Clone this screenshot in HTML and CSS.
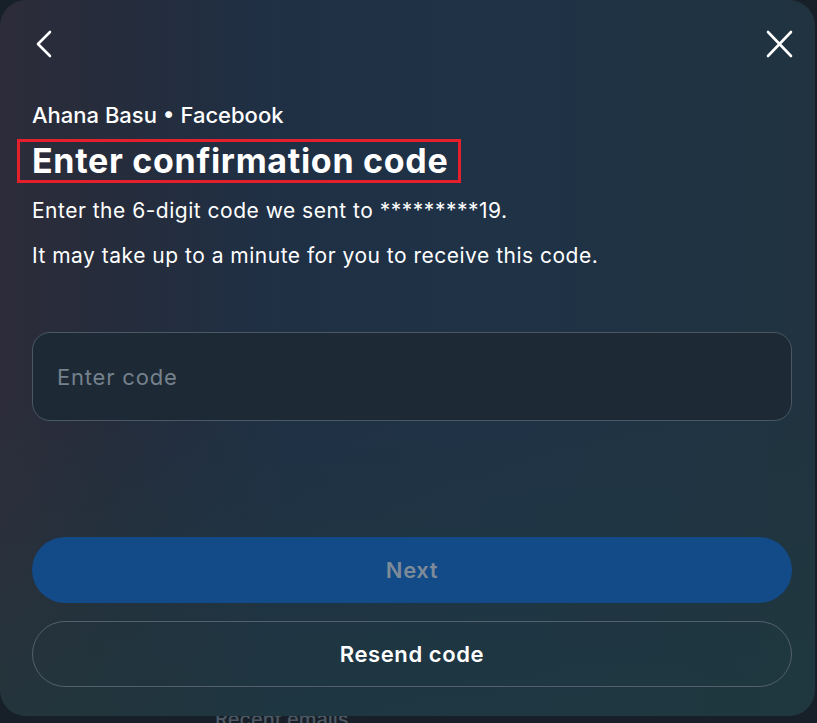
FILE: index.html
```html
<!DOCTYPE html>
<html lang="en">
<head>
  <meta charset="UTF-8">
  <meta name="viewport" content="width=device-width, initial-scale=1.0">
  <title>Enter confirmation code</title>
  <link rel="stylesheet" href="styles.css">
</head>
<body>
  <div class="behind">Recent emails</div>
  <div class="card">
    <div class="top-bar">
      <button class="icon-btn" aria-label="Back">
        <svg width="28" height="28" viewBox="0 0 28 28"><path d="M16 2 L4 14 L16 26" fill="none" stroke="#fff" stroke-width="2.6" stroke-linecap="round" stroke-linejoin="round"/></svg>
      </button>
      <button class="icon-btn" aria-label="Close">
        <svg width="28" height="28" viewBox="0 0 28 28"><path d="M3 2 L26 26 M26 2 L3 26" fill="none" stroke="#fff" stroke-width="2.6" stroke-linecap="round"/></svg>
      </button>
    </div>

    <div class="account">Ahana Basu • Facebook</div>
    <h1><span class="marked">Enter confirmation code</span></h1>
    <p class="desc">Enter the 6-digit code we sent to *********19.</p>
    <p class="desc">It may take up to a minute for you to receive this code.</p>

    <input class="code-input" type="text" placeholder="Enter code">

    <div class="actions">
      <button class="btn btn-primary" disabled>Next</button>
      <button class="btn btn-outline">Resend code</button>
    </div>
  </div>
</body>
</html>
```

FILE: styles.css
```css
body {
  margin: 0;
  padding: 0;
  width: 817px;
  height: 723px;
  overflow: hidden;
  background-color: #172029;
  font-family: Inter, "Open Sans", sans-serif;
  color: #fff;
  position: relative;
}

.behind {
  position: absolute;
  left: 215px;
  top: 707px;
  font-size: 20px;
  line-height: 24px;
  font-weight: 500;
  color: #4d5863;
}

.card {
  position: relative;
  width: 815px;
  height: 716px;
  box-sizing: border-box;
  padding: 30px 23px 0 32px;
  border-radius: 26px;
  background:
    linear-gradient(180deg, rgba(30, 50, 70, 0) 55%, rgba(30, 60, 62, 0.55) 100%),
    linear-gradient(90deg, #2d2c3a 0%, #262c3b 12%, #1f3045 35%, #1f3246 65%, #20333f 100%);
  display: flex;
  flex-direction: column;
}

.top-bar {
  display: flex;
  justify-content: space-between;
  height: 28px;
  margin-left: 2px;
  margin-right: -1px;
}

.icon-btn {
  background: none;
  border: none;
  padding: 0;
  width: 28px;
  height: 28px;
  cursor: pointer;
}

.account {
  margin-top: 44px;
  font-size: 22px;
  font-weight: 500;
  line-height: 26px;
}

h1 {
  margin: 11px 0 0 -15px;
  font-size: 34px;
  font-weight: 700;
  line-height: 38px;
  letter-spacing: 0.7px;
}

.marked {
  display: inline-block;
  border: 3px solid #e3202c;
  padding: 0 10px 0 12px;
}

.desc {
  margin: 16px 0 0;
  font-size: 21px;
  line-height: 24px;
  letter-spacing: 0.5px;
}

.desc + .desc {
  margin-top: 21px;
}

.code-input {
  margin-top: 64px;
  height: 89px;
  box-sizing: border-box;
  width: 100%;
  padding: 0 24px;
  border: 1px solid #4a5866;
  border-radius: 18px;
  background-color: #1d2935;
  font-family: inherit;
  font-size: 22px;
  letter-spacing: 0.8px;
  color: #fff;
}

.code-input::placeholder {
  color: #75818c;
}

.code-input:focus {
  outline: none;
}

.actions {
  margin-top: 116px;
  display: flex;
  flex-direction: column;
  gap: 18px;
}

.btn {
  height: 66px;
  width: 100%;
  border-radius: 33px;
  font-family: inherit;
  font-size: 22px;
  font-weight: 600;
  letter-spacing: 0.6px;
  cursor: pointer;
}

.btn-primary {
  border: none;
  background-color: #134a88;
  color: #7d8b99;
}

.btn-outline {
  border: 1px solid #52606d;
  background: transparent;
  color: #fff;
}
```
